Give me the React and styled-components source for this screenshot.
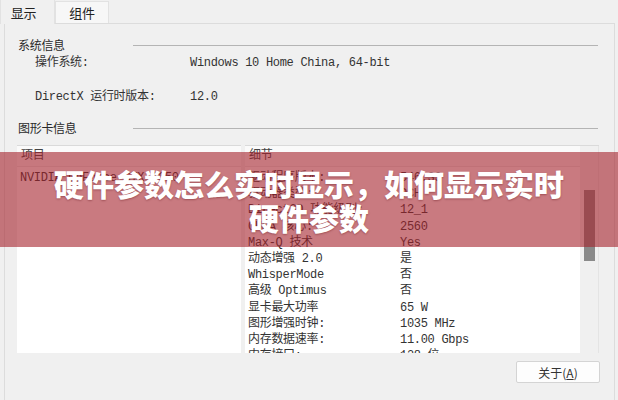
import React from "react";
import styled, { createGlobalStyle } from "styled-components";

const GlobalStyle = createGlobalStyle`
  html, body { margin: 0; padding: 0; background: #f5f5f5; }
  body {
    font-family: "Liberation Mono", "Noto Sans CJK SC", monospace;
    font-size: 12px;
    color: #333;
  }
`;

const Window = styled.div`
  position: relative;
  width: 618px;
  height: 400px;
  overflow: hidden;
  background: #f0f0f0;
  letter-spacing: -0.3px;
`;

const TabBar = styled.div`
  display: flex;
  height: 23px;
  background: #f0f0f0;
`;

const Tab = styled.div`
  display: flex;
  align-items: center;
  justify-content: center;
  width: ${(p) => (p.$active ? "55px" : "54px")};
  height: ${(p) => (p.$active ? "24px" : "22px")};
  margin-top: ${(p) => (p.$active ? "0" : "1px")};
  box-sizing: border-box;
  background: ${(p) => (p.$active ? "#f0f0f0" : "#f7f7f7")};
  border: 1px solid #e2e2e2;
  border-bottom: none;
  border-top: ${(p) => (p.$active ? "none" : "1px solid #e2e2e2")};
  position: relative;
  z-index: ${(p) => (p.$active ? 1 : 0)};
  font-size: 13px;
  padding-right: ${(p) => (p.$active ? "8px" : "0")};
  color: #222;
`;

const Panel = styled.div`
  margin-left: 4px;
  width: 611px;
  height: 380px;
  box-sizing: border-box;
  border: 1px solid #dcdcdc;
  border-bottom: none;
  background: #f0f0f0;
  padding: 12px 16px 0 13px;
  display: flex;
  flex-direction: column;
`;

const GroupHeader = styled.div`
  display: grid;
  grid-template-columns: 115px 1fr;
  align-items: center;
  height: 16px;
  margin-top: ${(p) => p.$mt || 0}px;
  color: #2a2a2a;
`;

const GroupLine = styled.div`
  height: 1px;
  background: #b4b4b4;
`;

const InfoRow = styled.div`
  display: grid;
  grid-template-columns: 155px 1fr;
  padding-left: 17px;
  height: 16px;
  line-height: 16px;
  margin-top: ${(p) => p.$mt || 0}px;
  white-space: nowrap;
`;

const Lists = styled.div`
  display: flex;
  gap: 4px;
  margin-top: 10px;
  margin-left: -1px;
  height: 208px;
  width: 582px;
`;

const ListBox = styled.div`
  position: relative;
  flex: ${(p) => (p.$grow ? "1" : "0 0 224px")};
  background: #fff;
  border-top: 1px solid #dadada;
  display: flex;
  flex-direction: column;
  overflow: hidden;
`;

const ListHeader = styled.div`
  height: 20px;
  line-height: 20px;
  padding-left: 4px;
  background: #fafafa;
  border-bottom: 1px solid #e8e8e8;
  margin-right: ${(p) => (p.$scroll ? "19px" : "0")};
  color: #444;
`;

const ListBody = styled.div`
  display: flex;
  flex: 1;
  min-height: 0;
`;

const Rows = styled.div`
  flex: 1;
  padding-top: 3px;
  overflow: hidden;
`;

const Row = styled.div`
  display: grid;
  grid-template-columns: 152px 1fr;
  height: 16.2px;
  line-height: 16.2px;
  padding-left: 3px;
  white-space: nowrap;
  color: #333;
`;

const ScrollTrack = styled.div`
  flex: 0 0 19px;
  background: #f0f0f0;
  margin-top: -21px;
  border-right: 1px solid #e4e4e4;
  box-sizing: border-box;
  position: relative;
`;

const Thumb = styled.div`
  position: absolute;
  left: 4px;
  top: 44px;
  width: 11px;
  height: 71px;
  background: #8a8a8a;
`;

const Footer = styled.div`
  display: flex;
  justify-content: flex-end;
  margin-top: 8px;
  margin-right: -2px;
`;

const Button = styled.button`
  width: 84px;
  height: 22px;
  background: #fdfdfd;
  border: 1px solid #d4d4d4;
  border-radius: 2px;
  font-family: "Noto Sans CJK SC", "Liberation Mono", sans-serif;
  font-size: 12px;
  color: #333;
  padding: 0;
  u { text-decoration: underline; }
`;

const Overlay = styled.div`
  position: absolute;
  left: 0;
  right: 0;
  top: 152px;
  height: 95px;
  background: rgba(165, 33, 43, 0.6);
  display: flex;
  align-items: center;
  justify-content: center;
  text-align: center;
`;

const Title = styled.h1`
  margin: 0;
  width: 520px;
  font-family: "Noto Sans CJK SC", sans-serif;
  font-weight: 900;
  font-size: 30px;
  line-height: 34px;
  letter-spacing: 0;
  color: #fff;
  text-shadow: 0 1px 2px rgba(80, 0, 10, 0.35);
`;

const details = [
  ["驱动程序版本:", "546.33"],
  ["驱动器类型:", "DCH"],
  ["Direct3D 功能级别:", "12_1"],
  ["CUDA 核心:", "2560"],
  ["Max-Q  技术", "Yes"],
  ["动态增强 2.0", "是"],
  ["WhisperMode", "否"],
  ["高级 Optimus", "否"],
  ["显卡最大功率", "65 W"],
  ["图形增强时钟:", "1035 MHz"],
  ["内存数据速率:", "11.00 Gbps"],
  ["内存接口:", "128 位"],
];

export default function App() {
  return (
    <>
      <GlobalStyle />
      <Window>
        <TabBar>
          <Tab $active>显示</Tab>
          <Tab>组件</Tab>
        </TabBar>
        <Panel>
          <GroupHeader>
            <span>系统信息</span>
            <GroupLine />
          </GroupHeader>
          <InfoRow $mt={3}>
            <span>操作系统:</span>
            <span>Windows 10 Home China, 64-bit</span>
          </InfoRow>
          <InfoRow $mt={18}>
            <span>DirectX 运行时版本:</span>
            <span>12.0</span>
          </InfoRow>
          <GroupHeader $mt={14}>
            <span>图形卡信息</span>
            <GroupLine />
          </GroupHeader>
          <Lists>
            <ListBox>
              <ListHeader>项目</ListHeader>
              <Rows>
                <Row>NVIDIA GeForce GTX 1650</Row>
              </Rows>
            </ListBox>
            <ListBox $grow>
              <ListHeader $scroll>细节</ListHeader>
              <ListBody>
                <Rows>
                  {details.map(([k, v]) => (
                    <Row key={k}>
                      <span>{k}</span>
                      <span>{v}</span>
                    </Row>
                  ))}
                </Rows>
                <ScrollTrack>
                  <Thumb />
                </ScrollTrack>
              </ListBody>
            </ListBox>
          </Lists>
          <Footer>
            <Button>
              关于(<u>A</u>)
            </Button>
          </Footer>
        </Panel>
        <Overlay>
          <Title>硬件参数怎么实时显示，如何显示实时硬件参数</Title>
        </Overlay>
      </Window>
    </>
  );
}
